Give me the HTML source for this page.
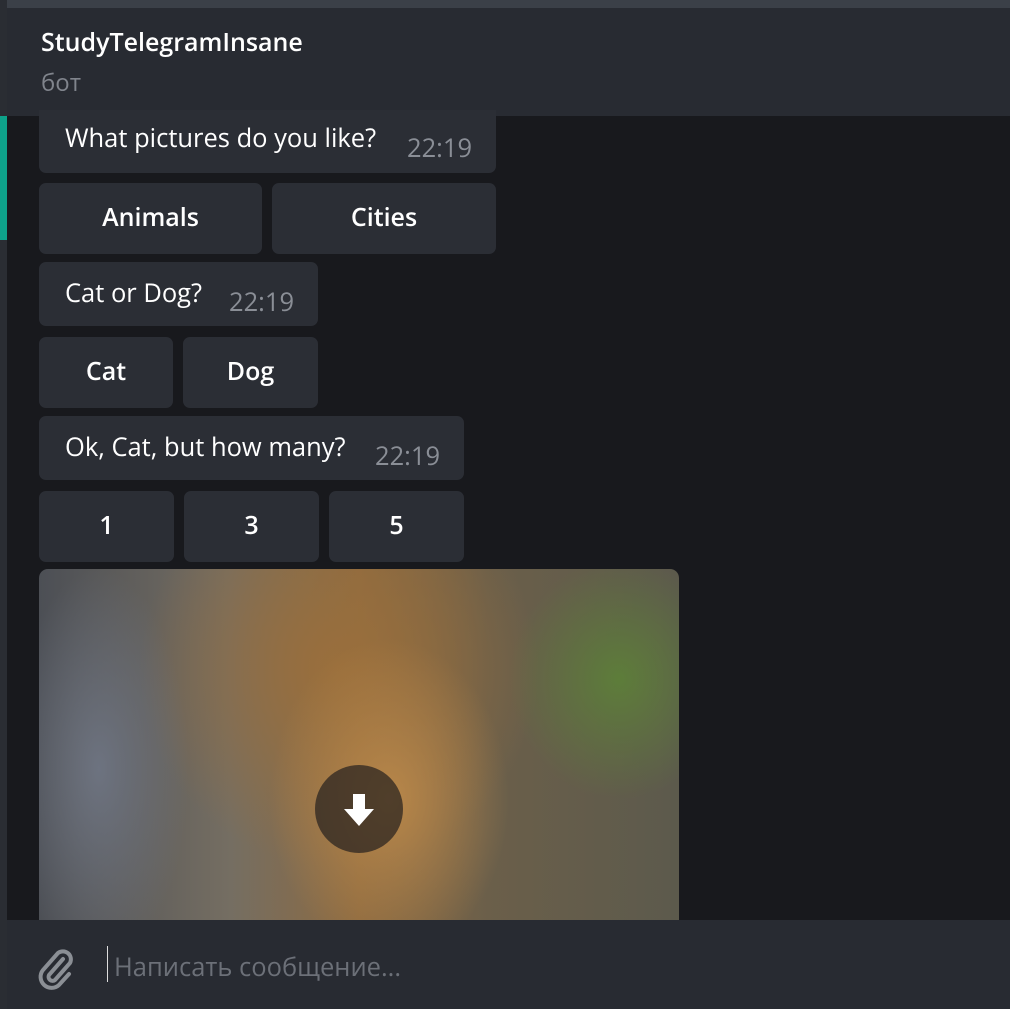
<!DOCTYPE html>
<html><head><meta charset="utf-8"><style>
body{margin:0;width:1010px;height:1009px;overflow:hidden;background:#18191d;font-family:"Open Sans","Liberation Sans","Noto Sans CJK SC",sans-serif;position:relative}
div{box-sizing:border-box}
.a{position:absolute}
.b{position:absolute;background:#2b2e35;border-radius:7px;color:#fff;font-size:25.5px}
.k{position:absolute;background:#2b2e35;border-radius:7px;color:#fff;font-size:25px;font-weight:600;display:flex;align-items:center;justify-content:center}
.t{position:absolute;color:#8a8e96;font-size:25.5px}
</style></head><body>
<div class="a" style="left:0;top:0;width:1010px;height:8px;background:#3b4048"></div>
<div class="a" style="left:0;top:0;width:7px;height:1009px;background:#2a2d33"></div>
<div class="a" style="left:7px;top:8px;width:1003px;height:108px;background:#282b32"></div>
<div class="a" style="left:41px;top:25px;color:#fff;font-size:25px;font-weight:600">StudyTelegramInsane</div>
<div class="a" style="left:41px;top:66px;color:#80848c;font-size:24px">бот</div>
<div class="a" style="left:0;top:116px;width:7px;height:124px;background:#0ea28a"></div>

<div class="b" style="left:39px;top:110px;width:457px;height:63px;border-radius:0 0 7px 7px"><span class="a" style="left:26px;top:11px">What pictures do you like?</span><span class="t" style="left:368px;top:21px">22:19</span></div>
<div class="k" style="left:39px;top:183px;width:223px;height:71px;padding-bottom:3px">Animals</div>
<div class="k" style="left:272px;top:183px;width:224px;height:71px;padding-bottom:3px">Cities</div>
<div class="b" style="left:39px;top:262px;width:279px;height:64px"><span class="a" style="left:26px;top:14px">Cat or Dog?</span><span class="t" style="left:190px;top:23px">22:19</span></div>
<div class="k" style="left:39px;top:337px;width:134px;height:71px;padding-bottom:3px">Cat</div>
<div class="k" style="left:183px;top:337px;width:135px;height:71px;padding-bottom:3px">Dog</div>
<div class="b" style="left:39px;top:416px;width:425px;height:64px"><span class="a" style="left:26px;top:14px">Ok, Cat, but how many?</span><span class="t" style="left:336px;top:23px">22:19</span></div>
<div class="k" style="left:39px;top:491px;width:135px;height:71px;padding-bottom:3px">1</div>
<div class="k" style="left:184px;top:491px;width:135px;height:71px;padding-bottom:3px">3</div>
<div class="k" style="left:329px;top:491px;width:135px;height:71px;padding-bottom:3px">5</div>

<div class="a" style="left:39px;top:569px;width:640px;height:351px;border-radius:9px 9px 0 0;overflow:hidden;background:
radial-gradient(ellipse 120px 160px at 350px 230px,#b8874a,transparent),
radial-gradient(ellipse 110px 120px at 580px 110px,#5d7d3a,transparent),
radial-gradient(ellipse 90px 200px at 60px 200px,#6d7380,transparent),
radial-gradient(ellipse 200px 200px at 300px 100px,#9a6f3c,transparent),
linear-gradient(90deg,#4c4f55 0%,#756e62 30%,#8d6a40 50%,#6b5f4a 70%,#5c5a4c 100%)">
<div class="a" style="left:276px;top:196px;width:88px;height:88px;border-radius:50%;background:rgba(35,32,30,.7)"></div>
<svg class="a" style="left:303px;top:223px" width="34" height="36" viewBox="0 0 34 36"><path d="M11 2h12v15h9L17 34 2 17h9z" fill="#fff"/></svg>
</div>

<div class="a" style="left:7px;top:920px;width:1003px;height:89px;background:#282b32"></div>
<svg class="a" style="left:36px;top:945px" width="42" height="46" viewBox="0 0 42 46"><path d="M27 14 13 30a4 4 0 0 0 6 5l15-17a8 8 0 0 0-12-10L7 25a11 11 0 0 0 16 15l10-11" fill="none" stroke="#8b8f95" stroke-width="4" stroke-linecap="round"/></svg>
<div class="a" style="left:107px;top:946px;width:1px;height:36px;background:#ddd"></div>
<div class="a" style="left:114px;top:950px;color:#6c7078;font-size:25.5px">Написать сообщение...</div>
</body></html>
